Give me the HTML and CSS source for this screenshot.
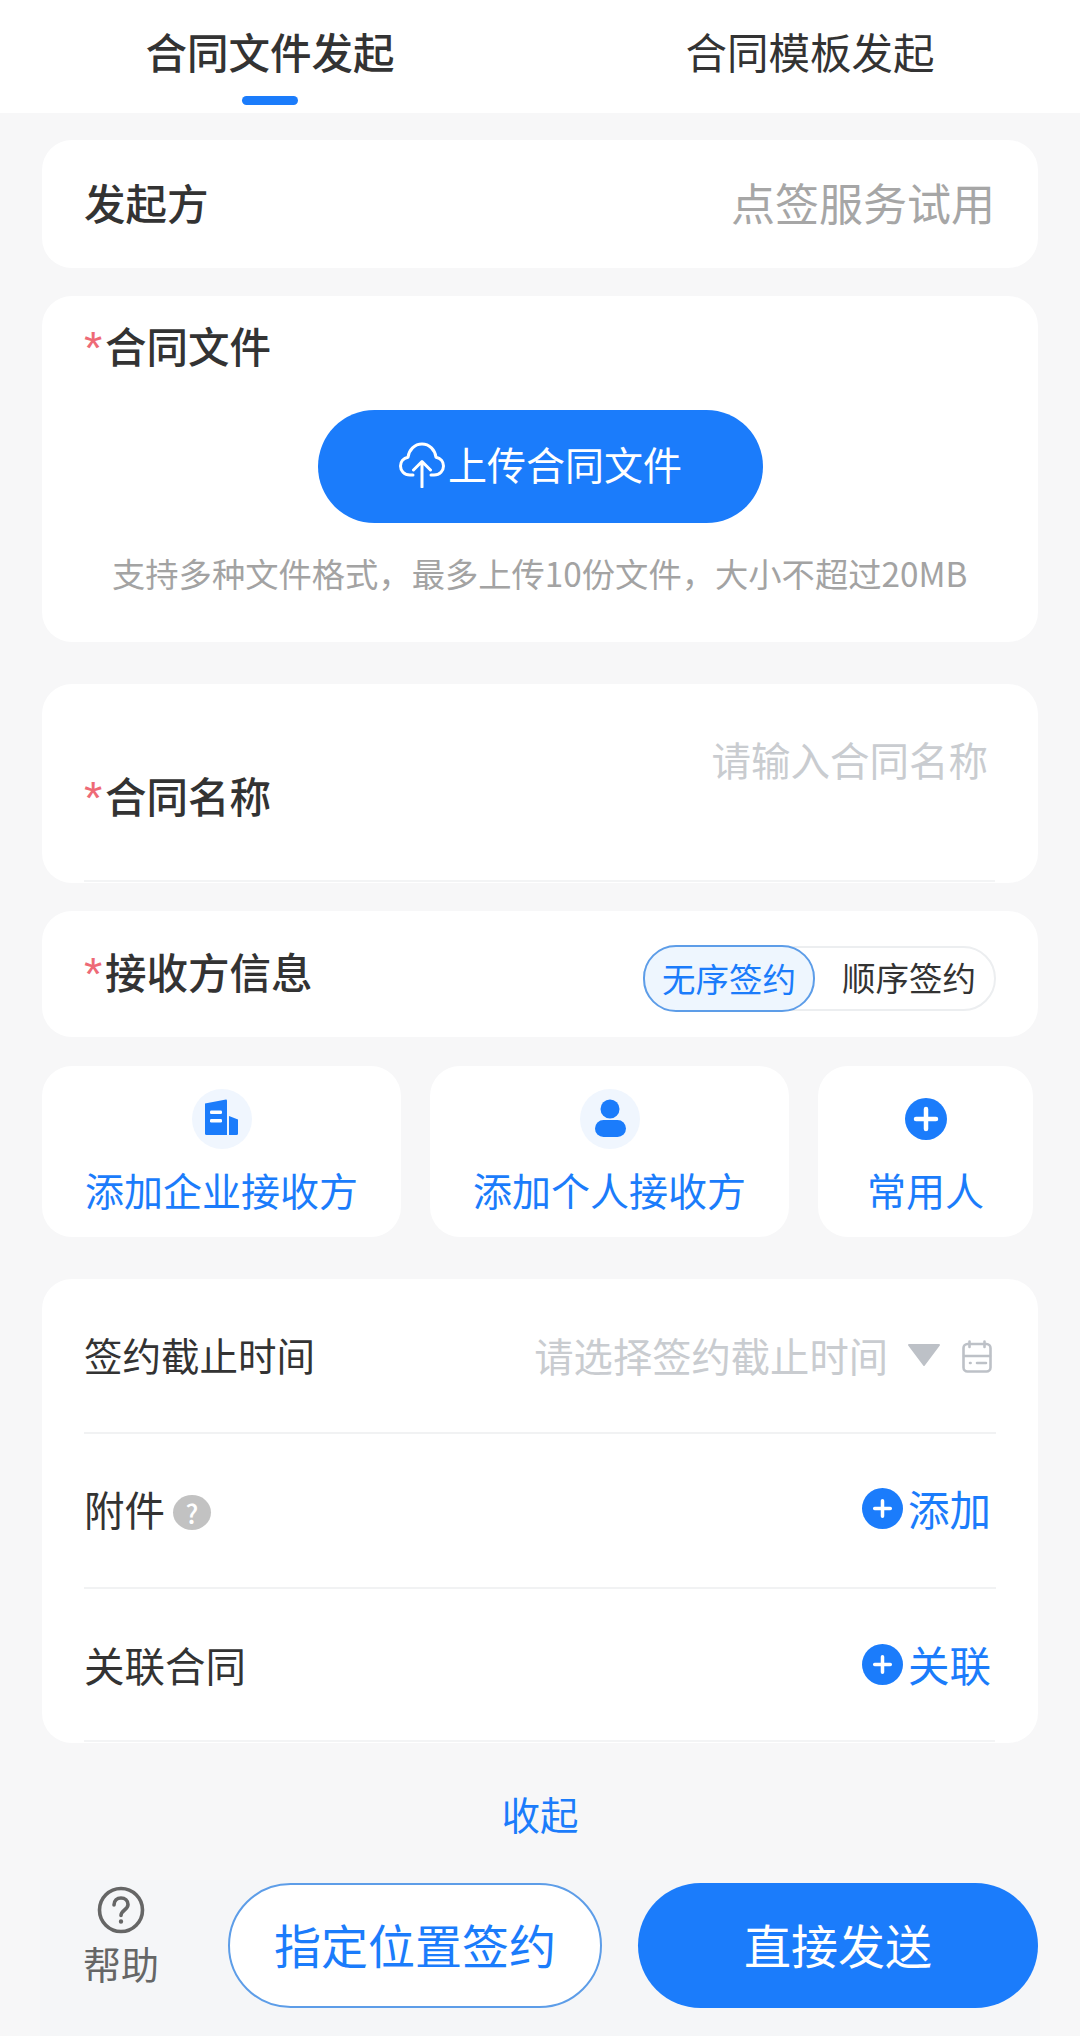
FILE: index.html
```html
<!DOCTYPE html>
<html lang="zh-CN">
<head>
<meta charset="utf-8">
<title>合同发起</title>
<link rel="stylesheet" href="styles.css">
</head>
<body>
<div class="page">
  <header class="tabs">
    <div class="tab tab-active">合同文件发起<span class="tab-bar"></span></div>
    <div class="tab">合同模板发起</div>
  </header>

  <main class="form">
    <section class="card card-sender">
      <span class="title">发起方</span>
      <span class="sender-name">点签服务试用</span>
    </section>

    <section class="card card-file">
      <div class="title"><span class="req">*</span>合同文件</div>
      <button class="upload">
        <svg class="upload-icon" viewBox="0 0 46 46" fill="none" stroke="#fff" stroke-width="3" stroke-linecap="round" stroke-linejoin="round">
          <path d="M14 33H11C5 33 1.500 28.500 1.500 24C1.500 19.500 4.500 16 9 15.200C10 8 15.500 2 23 2C30.500 2 36 8 37 15.200C41.500 16 44.500 19.500 44.500 24C44.500 28.500 41 33 35 33H32"/>
          <path d="M23 45V20M14.500 28L23 19.500L31.500 28"/>
        </svg>
        <span class="upload-text">上传合同文件</span>
      </button>
      <p class="hint">支持多种文件格式，最多上传10份文件，大小不超过20MB</p>
    </section>

    <section class="card card-name">
      <div class="title"><span class="req">*</span>合同名称</div>
      <div class="placeholder">请输入合同名称</div>
      <div class="rule"></div>
    </section>

    <section class="card card-receiver">
      <div class="title"><span class="req">*</span>接收方信息</div>
      <div class="switch">
        <span class="switch-item switch-on">无序签约</span>
        <span class="switch-item">顺序签约</span>
      </div>
    </section>

    <section class="quick">
      <div class="quick-card quick-wide">
        <span class="quick-icon">
          <svg viewBox="0 0 60 60">
            <path fill="#1b7cfb" d="M13 14.500L34 10.500a1 1 0 0 1 1 1V46H14.500a1.500 1.500 0 0 1-1.500-1.500z"/>
            <path fill="#1b7cfb" d="M37 27l9 3.500V44.500a1.500 1.500 0 0 1-1.500 1.500H37z"/>
            <rect x="18" y="21.500" width="12" height="3.500" rx="1.200" fill="#fff"/>
            <rect x="18" y="30" width="12" height="3.500" rx="1.200" fill="#fff"/>
          </svg>
        </span>
        <span class="quick-label">添加企业接收方</span>
      </div>
      <div class="quick-card quick-wide">
        <span class="quick-icon">
          <svg viewBox="0 0 60 60">
            <circle cx="30" cy="20" r="9.500" fill="#1b7cfb"/>
            <rect x="15" y="31" width="31" height="17" rx="8.500" fill="#1b7cfb"/>
          </svg>
        </span>
        <span class="quick-label">添加个人接收方</span>
      </div>
      <div class="quick-card quick-narrow">
        <span class="quick-icon quick-icon-plain">
          <svg viewBox="0 0 60 60">
            <circle cx="30" cy="30" r="21" fill="#1b7cfb"/>
            <path d="M30 20V40M20 30H40" stroke="#fff" stroke-width="4.500" stroke-linecap="round"/>
          </svg>
        </span>
        <span class="quick-label">常用人</span>
      </div>
    </section>

    <section class="card card-rows">
      <div class="row">
        <span class="row-label row-label-small">签约截止时间</span>
        <span class="row-value">
          <span class="date-text">请选择签约截止时间</span>
          <svg class="caret" viewBox="0 0 34 24"><path d="M2 1H32a1 1 0 0 1 .800 1.600L17.800 22.500a1 1 0 0 1-1.600 0L1.200 2.600A1 1 0 0 1 2 1z" fill="#bdc1c7"/></svg>
          <svg class="calendar" viewBox="0 0 30 33" fill="none" stroke="#bdc1c7" stroke-width="2.600" stroke-linecap="round">
            <rect x="1.500" y="4" width="27" height="27.500" rx="4"/>
            <path d="M7.500 1.500V7M22.500 1.500V7M2 16H28"/>
            <path d="M8 23H8.600M15 23H24"/>
          </svg>
        </span>
      </div>
      <div class="row">
        <span class="row-label">附件<span class="tip">?</span></span>
        <span class="row-action">
          <svg class="plus" viewBox="0 0 42 42"><circle cx="21" cy="21" r="21" fill="#1b7cfb"/><path d="M21 13V29M13 21H29" stroke="#fff" stroke-width="3.600" stroke-linecap="round"/></svg><span class="action-text">添加</span>
        </span>
      </div>
      <div class="row">
        <span class="row-label">关联合同</span>
        <span class="row-action">
          <svg class="plus" viewBox="0 0 42 42"><circle cx="21" cy="21" r="21" fill="#1b7cfb"/><path d="M21 13V29M13 21H29" stroke="#fff" stroke-width="3.600" stroke-linecap="round"/></svg><span class="action-text">关联</span>
        </span>
      </div>
      <div class="rule"></div>
    </section>

    <div class="collapse">收起</div>
  </main>

  <footer class="actions">
    <div class="help">
      <svg class="help-icon" viewBox="0 0 48 48" fill="none" stroke="#666" stroke-width="3.600" stroke-linecap="round">
        <circle cx="24" cy="24" r="21.500"/>
        <path d="M17 19c0-4.500 3-7 7-7s7 2.500 7 6.500c0 5.500-7 5.500-7 11"/>
        <circle cx="24" cy="35.500" r="1" fill="#666" stroke-width="2.400"/>
      </svg>
      <span class="help-text">帮助</span>
    </div>
    <button class="btn btn-outline">指定位置签约</button>
    <button class="btn btn-solid">直接发送</button>
  </footer>
</div>
</body>
</html>
```

FILE: styles.css
```css
* { box-sizing: border-box; }

html, body {
  margin: 0;
  padding: 0;
}

body {
  background: #f7f7f8;
  font-family: "Noto Sans CJK SC", "Noto Sans", sans-serif;
  color: #333;
}

.page {
  width: 1080px;
  height: 2036px;
  overflow: hidden;
  display: flex;
  flex-direction: column;
}

/* top tabs */
.tabs {
  height: 113px;
  background: #fff;
  display: flex;
  flex-shrink: 0;
}

.tab {
  position: relative;
  width: 540px;
  padding-top: 21px;
  text-align: center;
  font-size: 41.500px;
  line-height: 60px;
  color: #333;
}

.tab-active { font-weight: 500; }

.tab-bar {
  position: absolute;
  left: 242px;
  top: 96px;
  width: 56px;
  height: 9px;
  border-radius: 5px;
  background: #1b7cfb;
}

/* stacked form */
.form {
  flex: 1;
  padding: 27px 42px 0;
  display: flex;
  flex-direction: column;
}

.card {
  background: #fff;
  border-radius: 30px;
  position: relative;
}

.title {
  font-size: 41.500px;
  line-height: 60px;
  font-weight: 500;
  color: #333;
}

.req {
  display: inline-block;
  width: 21px;
  font-family: "Liberation Sans", sans-serif;
  font-size: 47px;
  line-height: 40px;
  color: #ee6a76;
  font-weight: 400;
  vertical-align: -1px;
}

.card-sender {
  height: 128px;
  padding: 0 43px 4px 42px;
  display: flex;
  align-items: center;
  justify-content: space-between;
}

.sender-name {
  font-size: 44px;
  color: #a6a6a6;
}

.card-file {
  height: 346px;
  margin-top: 28px;
  padding: 19px 0 0 42px;
}

.upload {
  display: flex;
  align-items: center;
  justify-content: center;
  width: 445px;
  height: 113px;
  margin: 35px 0 0 234px;
  padding: 0 0 4px;
  border: none;
  border-radius: 57px;
  background: #1b7cfb;
  color: #fff;
  font: inherit;
  font-size: 39px;
}

.upload-text { margin-bottom: 3px; }

.upload-icon {
  width: 46px;
  height: 46px;
  margin-right: 3px;
  flex-shrink: 0;
}

.hint {
  margin: 27px 0 0 28px;
  font-size: 33.300px;
  line-height: 46px;
  color: #a3a3a3;
  white-space: nowrap;
}

.card-name {
  height: 199px;
  margin-top: 42px;
  padding: 81px 0 0 42px;
}

.placeholder {
  position: absolute;
  right: 50px;
  top: 47px;
  font-size: 39.500px;
  line-height: 56px;
  color: #c9ccd0;
}

.rule {
  position: absolute;
  left: 42px;
  right: 43px;
  bottom: 1px;
  height: 2px;
  background: #f3f4f5;
}

.card-receiver {
  height: 126px;
  margin-top: 28px;
  padding: 30px 42px 0;
  display: flex;
  justify-content: space-between;
}

.switch {
  display: flex;
  width: 353px;
  height: 65px;
  margin: 5px 0 0 0;
  border: 2px solid #eceef0;
  border-radius: 33px;
  position: relative;
}

.switch-item {
  flex: 1;
  padding-left: 9px;
  font-size: 33.500px;
  line-height: 58px;
  text-align: center;
  color: #333;
}

.switch-on {
  flex: 0 0 172px;
  height: 67px;
  margin: -3px 0 0 -2px;
  padding-left: 0;
  border: 2px solid #5d9de8;
  border-radius: 33px;
  background: #eef6fe;
  color: #1b7cfb;
  line-height: 61px;
}

/* add-receiver shortcuts */
.quick {
  display: flex;
  gap: 29px;
  margin-top: 29px;
}

.quick-card {
  height: 171px;
  background: #fff;
  border-radius: 30px;
  display: flex;
  flex-direction: column;
  align-items: center;
  padding-top: 23px;
}

.quick-wide { width: 359px; }
.quick-narrow { width: 215px; }

.quick-icon {
  width: 60px;
  height: 60px;
  border-radius: 50%;
  background: #f0f6fe;
}

.quick-icon-plain { background: none; }

.quick-icon svg {
  display: block;
  width: 60px;
  height: 60px;
}

.quick-label {
  margin-top: 12px;
  font-size: 39px;
  line-height: 56px;
  color: #1b7cfb;
}

/* detail rows */
.card-rows {
  height: 464px;
  margin-top: 42px;
}

.row {
  height: 155px;
  margin: 0 42px;
  padding-bottom: 2px;
  display: flex;
  align-items: center;
  justify-content: space-between;
  border-bottom: 2px solid #f1f2f3;
}

.row:nth-child(3) { border-bottom: none; }

.row-label {
  display: flex;
  align-items: center;
  margin-bottom: 2px;
  font-size: 40.500px;
  color: #333;
}

.row-label-small {
  font-size: 38.500px;
  margin-bottom: 1px;
}

.tip {
  width: 38px;
  height: 35px;
  margin: 7px 0 0 8px;
  border-radius: 50%;
  background: #c2c2c2;
  color: #fff;
  font-size: 26px;
  line-height: 35px;
  text-align: center;
  font-weight: 500;
}

.row-value {
  display: flex;
  align-items: center;
  padding-right: 4px;
}

.date-text {
  font-size: 39.300px;
  margin-bottom: 1px;
  color: #c9ccd0;
}

.caret {
  width: 34px;
  height: 24px;
  margin: 0 21px 0 19px;
}

.calendar {
  width: 30px;
  height: 33px;
  margin-top: 3px;
}

.row-action {
  display: flex;
  align-items: center;
  padding-right: 5px;
  font-size: 41.500px;
  color: #1b7cfb;
}

.action-text { margin-bottom: 3px; }

.plus {
  width: 41px;
  height: 41px;
  margin-right: 5px;
  margin-bottom: 2px;
}

.collapse {
  margin-top: 43px;
  text-align: center;
  font-size: 38.500px;
  line-height: 54px;
  color: #1b7cfb;
}

/* bottom action bar */
.actions {
  position: absolute;
  top: 1880px;
  left: 40px;
  width: 1000px;
  height: 156px;
  padding-top: 3px;
  background: #f5f6f8;
  display: flex;
  align-items: flex-start;
}

.help {
  width: 189px;
  display: flex;
  flex-direction: column;
  align-items: center;
  padding-right: 27px;
  font-size: 38px;
  line-height: 54px;
  color: #666;
}

.help-icon {
  width: 48px;
  height: 48px;
  margin-top: 3px;
}

.help-text { margin-top: 2px; }

.btn {
  height: 125px;
  border-radius: 63px;
  font: inherit;
  font-size: 47px;
  padding: 0 0 4px;
}

.btn-outline {
  width: 374px;
  margin-left: -1px;
  background: #fff;
  border: 2px solid #5d9de8;
  color: #1b7cfb;
}

.btn-solid {
  width: 400px;
  margin-left: 36px;
  background: #1b7cfb;
  border: none;
  color: #fff;
}
```
